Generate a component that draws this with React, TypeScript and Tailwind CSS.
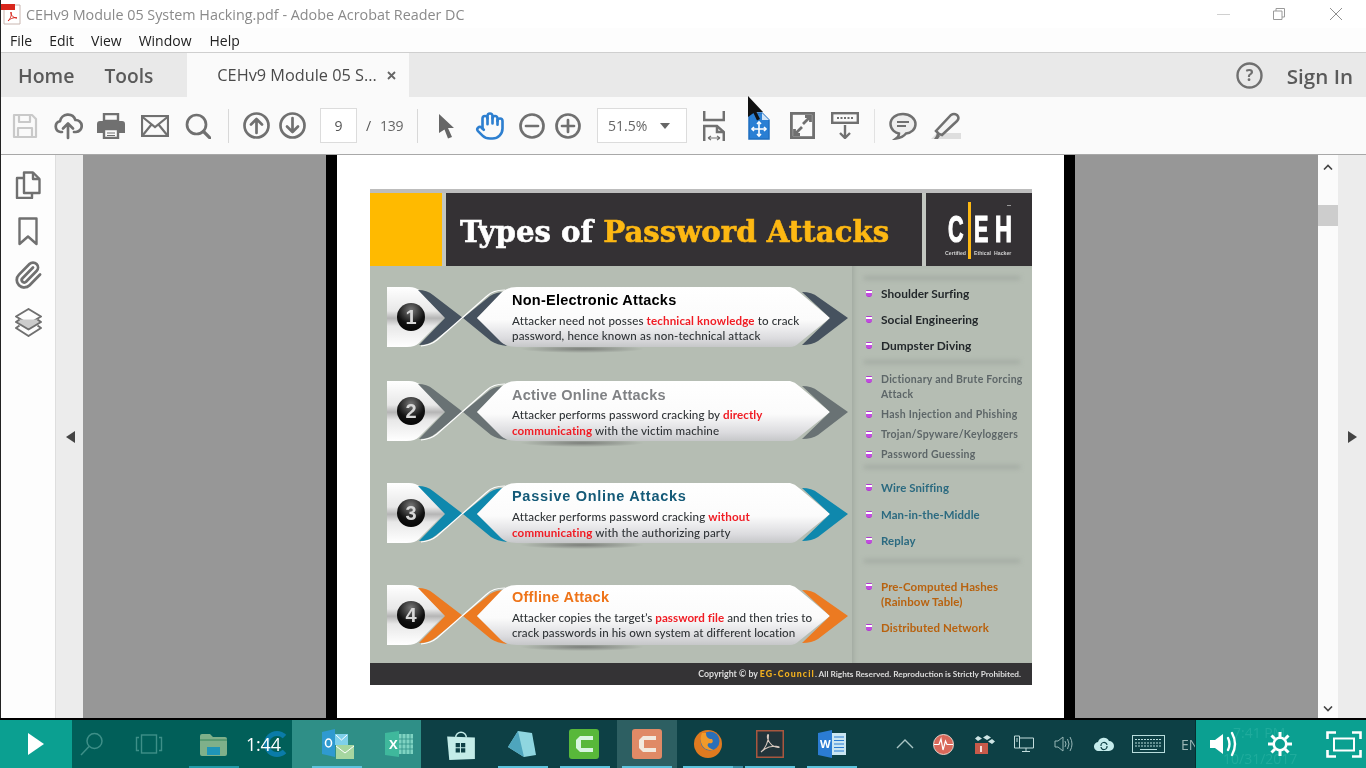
import React from "react";
import { Hand, Paperclip } from "lucide-react";

const G = "#707070";
const ui = "font-['Open_Sans',sans-serif]";

function Ribbon({ n, color, titleColor, title, t, m, body, children }: { n: string; color: string; titleColor: string; title: string; t: string; m: string; body: string; children: React.ReactNode }) {
  const id = "g" + n;
  return (
    <div className="relative h-[60px] w-[461px] flex">
      <svg className="absolute inset-0 overflow-visible" width="461" height="60" viewBox="0 0 461 60">
        <defs>
          <linearGradient id={id} x1="0" y1="0" x2="0" y2="1">
            <stop offset="0" stopColor="#ffffff" />
            <stop offset="0.55" stopColor="#fbfbfb" />
            <stop offset="0.85" stopColor="#dcdcdf" />
            <stop offset="1" stopColor="#c6c7c9" />
          </linearGradient>
          <linearGradient id={id + "l"} x1="0" y1="0" x2="0" y2="1">
            <stop offset="0" stopColor="#ffffff" />
            <stop offset="0.4" stopColor="#e8e8e8" />
            <stop offset="0.52" stopColor="#b5b5b5" />
            <stop offset="0.65" stopColor="#e8e8e8" />
            <stop offset="1" stopColor="#ffffff" />
          </linearGradient>
          <radialGradient id={id + "s"}>
            <stop offset="0" stopColor="#555" stopOpacity="0.6" />
            <stop offset="1" stopColor="#555" stopOpacity="0" />
          </radialGradient>
        </defs>
        <ellipse cx="195" cy="62" rx="62" ry="4" fill={`url(#${id}s)`} />
        <path d="M0 0H22Q29 0 33 4L58 30L32 56Q28 60 20 60H0Z" fill={`url(#${id}l)`} />
        <path d="M31 3Q40 3 46 8L76 31L48 53Q42 58 32 58L58 31Z" fill={color} />
        <path d="M118 5Q109 5 103 9L76 31L104 54Q110 58 120 59L90 31Z" fill={color} />
        <path d="M34 59Q44 58 50 53L100 9Q106 3 118 3" fill="none" stroke="#fff" strokeWidth="1.2" />
        <path d="M90 31L114 6Q120 0 130 0H403Q408 1 412 5L443 31L412 56Q408 60 403 60H130Q120 60 114 55Z" fill={`url(#${id})`} />
        <path d="M415 5Q425 5 431 10L461 31L431 54Q425 58 415 58L443 31Z" fill={color} />
      </svg>
      <div className="relative ml-[10px] mt-[16px] w-[28px] h-[28px] rounded-full bg-[radial-gradient(circle_at_50%_25%,#777,#111_55%,#000)] flex items-center justify-center text-[#d8d8d8] text-[20px] font-black font-['Liberation_Sans',sans-serif] leading-none">
        {n}
      </div>
      <div className={`relative ml-[87px] ${t}`}>
        <div className={`h-[16px] leading-[16px] text-[14.5px] font-bold font-['Liberation_Sans',sans-serif] whitespace-nowrap ${titleColor}`}>{title}</div>
        <div className={`${m} text-[11.6px] text-[#2f3336] font-medium font-['Lato',sans-serif] whitespace-nowrap ${body}`}>{children}</div>
      </div>
    </div>
  );
}

const Red = ({ children }: { children: React.ReactNode }) => <span className="text-[#f01c24] font-bold">{children}</span>;

function Li({ c, lh, bp, lines }: { c: string; lh: string; bp: string; lines: string[] }) {
  return (
    <div className={`flex ${lh} ${c}`}>
      <span className={`w-[29px] shrink-0 flex pl-[14px] ${bp}`}><span className="block w-[6px] h-[7px] rounded-b-[3px] rounded-t-[1px] bg-[#c24be0] border-y border-[#b03bd0] shadow-[inset_0_2px_0_#fff]" /></span>
      <div>{lines.map((l) => <div key={l} className="whitespace-nowrap">{l}</div>)}</div>
    </div>
  );
}

const Sh = ({ m = "-mt-[2px] -mb-[2px]" }: { m?: string }) => <div className={`h-[4px] mx-[12px] bg-[#a4aca3] blur-[2px] ${m}`} />;

function Slide() {
  return (
    <div className="w-[662px] h-[496px] mt-[34px] ml-[33px] flex flex-col bg-[#b5bdb3] border-t-[4px] border-[#bdbdbd]">
      <div className="h-[73px] flex bg-[#c2c6c0]">
        <div className="w-[72px] bg-[#ffba00]" />
        <div className="ml-[4px] w-[476px] bg-[#343134] flex items-center pl-[14px]">
          <span className="mt-[7px] font-['DejaVu_Serif',serif] font-bold text-[29.2px] [-webkit-text-stroke:0.6px_currentColor] text-white whitespace-nowrap">Types of <span className="text-[#fdb813]">Password Attacks</span></span>
        </div>
        <div className="ml-[4px] w-[106px] bg-[#343134] relative flex items-center pl-[22px] pt-[1px] text-white font-bold text-[36px] leading-none font-['Liberation_Sans',sans-serif] [-webkit-text-stroke:1.2px_#fff]">
          <span className="w-[15px] origin-left scale-x-[0.6]">C</span>
          <span className="ml-[5px] w-[3px] h-[57px] bg-[#fdb813]" />
          <span className="ml-[3px] w-[14px] origin-left scale-x-[0.6]">E</span>
          <span className="ml-[7px] w-[17px] origin-left scale-x-[0.65]">H</span>
          <span className="absolute left-[81px] top-[12px] w-[4px] h-px bg-[#999]" />
          <div className="absolute left-[19px] top-[57px] flex text-[5.2px] leading-[6px] text-[#cfcfcf] whitespace-nowrap [-webkit-text-stroke:0px]">
            <span className="w-[29px]">Certified</span>
            <span className="w-[20px]">Ethical</span>
            <span>Hacker</span>
          </div>
        </div>
      </div>
      <div className="flex-1 flex min-h-0">
        <div className="w-[482px] pl-[17px] pt-[21px] flex flex-col">
          <Ribbon n="1" color="#46525f" titleColor="text-black tracking-[0.25px]" t="pt-[5px]" m="mt-[5px]" body="leading-[15px] tracking-[0.12px]" title="Non-Electronic Attacks">
            Attacker need not posses <Red>technical knowledge</Red> to crack<br />password, hence known as non-technical attack
          </Ribbon>
          <div className="h-[34px]" />
          <Ribbon n="2" color="#697274" titleColor="text-[#808285] tracking-[0.25px]" t="pt-[6px]" m="mt-[4px]" body="leading-[16px] tracking-[0.1px]" title="Active Online Attacks">
            Attacker performs password cracking by <Red>directly</Red><br /><Red>communicating</Red> with the victim machine
          </Ribbon>
          <div className="h-[42px]" />
          <Ribbon n="3" color="#0f88ad" titleColor="text-[#145a78] tracking-[0.7px]" t="pt-[5px]" m="mt-[5px]" body="leading-[16px] tracking-[0.12px]" title="Passive Online Attacks">
            Attacker performs password cracking <Red>without</Red><br /><Red>communicating</Red> with the authorizing party
          </Ribbon>
          <div className="h-[42px]" />
          <Ribbon n="4" color="#ec7a21" titleColor="text-[#ee7419] tracking-[0.25px]" t="pt-[4px]" m="mt-[5px]" body="leading-[15px] tracking-[0.05px]" title="Offline Attack">
            Attacker copies the target’s <Red>password file</Red> and then tries to<br />crack passwords in his own system at different location
          </Ribbon>
        </div>
        <div className="flex-1 flex flex-col shadow-[inset_4px_0_4px_-2px_#a2aaa1] font-['Lato',sans-serif] font-bold">
          <div className="h-[96px] text-[11.9px] tracking-[0.05px]">
            <Sh m="mt-[10px] -mb-[14px]" />
            <div className="pt-[15px]">
              <Li c="text-[#23282b]" lh="leading-[26px]" bp="pt-[9px]" lines={["Shoulder Surfing"]} />
              <Li c="text-[#23282b]" lh="leading-[26px]" bp="pt-[9px]" lines={["Social Engineering"]} />
              <Li c="text-[#23282b]" lh="leading-[26px]" bp="pt-[9px]" lines={["Dumpster Diving"]} />
            </div>
          </div>
          <div className="h-[105px] text-[10.5px] tracking-[0.27px]">
            <Sh />
            <div className="pt-[10px] flex flex-col gap-[5px]">
              <Li c="text-[#5d6668]" lh="leading-[15px]" bp="pt-[4px]" lines={["Dictionary and Brute Forcing", "Attack"]} />
              <Li c="text-[#5d6668]" lh="leading-[15px]" bp="pt-[4px]" lines={["Hash Injection and Phishing"]} />
              <Li c="text-[#5d6668]" lh="leading-[15px]" bp="pt-[4px]" lines={["Trojan/Spyware/Keyloggers"]} />
              <Li c="text-[#5d6668]" lh="leading-[15px]" bp="pt-[4px]" lines={["Password Guessing"]} />
            </div>
          </div>
          <div className="h-[94px] text-[11.4px] tracking-[0.1px]">
            <Sh />
            <div className="pt-[8px]">
              <Li c="text-[#2b6a80]" lh="leading-[26.5px]" bp="pt-[9px]" lines={["Wire Sniffing"]} />
              <Li c="text-[#2b6a80]" lh="leading-[26.5px]" bp="pt-[9px]" lines={["Man-in-the-Middle"]} />
              <Li c="text-[#2b6a80]" lh="leading-[26.5px]" bp="pt-[9px]" lines={["Replay"]} />
            </div>
          </div>
          <div className="flex-1 text-[11.5px] tracking-[0.1px]">
            <Sh />
            <div className="pt-[18px] flex flex-col gap-[11px]">
              <Li c="text-[#b8620f]" lh="leading-[15px]" bp="pt-[4px]" lines={["Pre-Computed Hashes", "(Rainbow Table)"]} />
              <Li c="text-[#b8620f]" lh="leading-[15px]" bp="pt-[4px]" lines={["Distributed Network"]} />
            </div>
          </div>
        </div>
      </div>
      <div className="h-[22px] bg-[#343335] flex items-center justify-end pr-[11px] text-[8.8px] font-bold font-['Lato',sans-serif] text-[#dcdcdc] whitespace-nowrap">
        Copyright © by&nbsp;<span className="text-[#f2b01e] font-black tracking-[1.1px]">EG-Council</span><span className="text-[8.25px]">. All Rights Reserved. Reproduction is Strictly Prohibited.</span>
      </div>
    </div>
  );
}

const S = { fill: "none", stroke: G, strokeWidth: 2.7, strokeLinecap: "round" as const, strokeLinejoin: "round" as const };

function Toolbar() {
  const slot = "flex justify-center items-center shrink-0";
  return (
    <div className={`h-[58px] bg-[#fafafa] border-b border-[#a8a8a8] flex items-center pl-[3px] ${ui}`}>
      <div className={`${slot} w-[42px]`}>
        <svg width="26" height="26" viewBox="0 0 26 26"><g fill="none" stroke="#c9c9c9" strokeWidth="2.2" strokeLinejoin="round"><path d="M2 2H20L24 6V24H2Z" /><path d="M7 2V9H18V2" /><path d="M6 24V15H20V24" /></g></svg>
      </div>
      <div className={`${slot} w-[44px]`}>
        <svg width="30" height="28" viewBox="0 0 30 28"><g {...S}><path d="M9 20H7.5A5.5 5.5 0 0 1 7 9.2 8 8 0 0 1 22.4 8 6 6 0 0 1 23 20H21" /><path d="M15 26V12M10 16.5L15 11.5 20 16.5" /></g></svg>
      </div>
      <div className={`${slot} w-[42px]`}>
        <svg width="28" height="26" viewBox="0 0 28 26"><path d="M7 1H21V8H7Z" fill="none" stroke={G} strokeWidth="2.4" /><path d="M3 8H25A3 3 0 0 1 28 11V20H22V15H6V20H0V11A3 3 0 0 1 3 8Z" fill={G} /><path d="M7 16H21V25H7Z" fill="none" stroke={G} strokeWidth="2.4" /><path d="M10 20H18M10 22.5H18" stroke={G} strokeWidth="1.2" /></svg>
      </div>
      <div className={`${slot} w-[46px]`}>
        <svg width="28" height="22" viewBox="0 0 28 22"><g fill="none" stroke={G} strokeWidth="2.2"><rect x="1" y="1" width="26" height="20" /><path d="M1.5 2L14 12 26.5 2M1.5 20.5L10.5 9.5M26.5 20.5L17.5 9.5" /></g></svg>
      </div>
      <div className={`${slot} w-[40px]`}>
        <svg width="26" height="26" viewBox="0 0 26 26"><g {...S}><circle cx="11.5" cy="11.5" r="9.5" /><path d="M18.5 18.5L25 25" strokeWidth="3.2" /></g></svg>
      </div>
      <div className="ml-[10px] w-px h-[34px] bg-[#d8d8d8]" />
      <div className={`${slot} w-[36px] ml-[9px]`}>
        <svg width="27" height="27" viewBox="0 0 27 27"><g {...S}><circle cx="13.5" cy="13.5" r="12" /><path d="M13.5 21V7M8 12.5L13.5 7 19 12.5" /></g></svg>
      </div>
      <div className={`${slot} w-[36px]`}>
        <svg width="27" height="27" viewBox="0 0 27 27"><g {...S}><circle cx="13.5" cy="13.5" r="12" /><path d="M13.5 6V20M8 14.5L13.5 20 19 14.5" /></g></svg>
      </div>
      <div className="ml-[10px] w-[37px] h-[35px] bg-white border border-[#dcdcdc] flex items-center justify-center text-[14px] text-[#555]">9</div>
      <span className="ml-[9px] w-[8px] text-[14px] text-[#555]">/</span>
      <span className="ml-[6px] w-[24px] text-[14px] text-[#666] tracking-[-0.3px]">139</span>
      <div className="ml-[13px] w-px h-[34px] bg-[#d8d8d8]" />
      <div className={`${slot} w-[56px]`}>
        <svg width="17" height="26" viewBox="0 0 17 26"><path d="M1 1L16 15H10L14 24 10 25.5 6.5 16.5 1 20Z" fill="#666" /></svg>
      </div>
      <div className={`${slot} w-[32px]`}><Hand size={30} color="#2d7fd0" strokeWidth={2.1} /></div>
      <div className={`${slot} w-[36px] ml-[8px]`}>
        <svg width="26" height="26" viewBox="0 0 26 26"><g {...S}><circle cx="13" cy="13" r="11.5" /><path d="M7 13H19" /></g></svg>
      </div>
      <div className={`${slot} w-[36px]`}>
        <svg width="26" height="26" viewBox="0 0 26 26"><g {...S}><circle cx="13" cy="13" r="11.5" /><path d="M7 13H19M13 7V19" /></g></svg>
      </div>
      <div className="ml-[11px] w-[90px] h-[35px] bg-white border border-[#dcdcdc] flex items-center pl-[10px] text-[14px] text-[#666]">
        51.5%
        <svg className="ml-[13px]" width="10" height="6" viewBox="0 0 10 6"><path d="M0 0H10L5 6Z" fill="#666" /></svg>
      </div>
      <div className={`${slot} w-[54px]`}>
        <svg width="22" height="30" viewBox="0 0 22 30"><g fill="none" stroke={G} strokeWidth="2.5"><path d="M1.2 0V9H20.8V0" /><path d="M1.2 30V15H14L20.8 21V30" /><path d="M14 15V21H20.8" /></g><path d="M5 27H17M5 27L8 25M5 27L8 29M17 27L14 25M17 27L14 29" stroke={G} strokeWidth="1.2" fill="none" /></svg>
      </div>
      <div className={`${slot} w-[36px]`}>
        <svg width="22" height="28" viewBox="0 0 22 28"><path d="M1 1H14L21 8V27H1Z" fill="#2a7fd4" stroke="#1f6fc0" strokeWidth="1.5" /><path d="M14 1V8H21" fill="#cfe3f7" /><g stroke="#fff" strokeWidth="1.6" fill="none"><path d="M11 10V24M4 17H18" /><path d="M9 12L11 10 13 12M9 22L11 24 13 22M6 15L4 17 6 19M16 15L18 17 16 19" /></g></svg>
      </div>
      <div className={`${slot} w-[50px]`}>
        <svg width="25" height="27" viewBox="0 0 25 27"><rect x="1.4" y="1.4" width="22.2" height="24.2" fill="none" stroke={G} strokeWidth="2.8" /><path d="M13 12L20 5M15 4.5H20.5V10M12 15L5 22M4.5 17V22.5H10" stroke={G} strokeWidth="2.8" fill="none" /></svg>
      </div>
      <div className={`${slot} w-[36px]`}>
        <svg width="28" height="27" viewBox="0 0 28 27"><g fill="none" stroke={G} strokeWidth="2.4"><rect x="1.2" y="1.2" width="25.6" height="9.6" /><path d="M14 13V26M9 21L14 26 19 21" /></g><path d="M6 6H22" stroke={G} strokeWidth="2" strokeDasharray="2 1.5" /></svg>
      </div>
      <div className="ml-[11px] w-px h-[34px] bg-[#e2e2e2]" />
      <div className={`${slot} w-[56px]`}>
        <svg width="28" height="28" viewBox="0 0 28 28"><path d="M14 2C7 2 1.5 6 1.5 12S7 21 10 21.5C10 23 9 25 7 26.5 11 26 15 24 17 21.5 22 21 26.5 17.5 26.5 12S21 2 14 2Z" fill="#eeeeee" stroke={G} strokeWidth="2.5" /><path d="M8 10H20M8 14H17" stroke={G} strokeWidth="1.8" /></svg>
      </div>
      <div className={`${slot} w-[30px]`}>
        <svg width="30" height="28" viewBox="0 0 30 28"><path d="M0 27L6 21H30V27Z" fill="#dedede" /><path d="M5 24L3 27H7L9 24 6 21Z" fill={G} /><path d="M8 22L5 19 20 3Q23 1 26 3 29 6 26 9L11 23Z" fill="#f4f4f4" stroke={G} strokeWidth="2.5" /></svg>
      </div>
    </div>
  );
}

function Sidebar() {
  return (
    <div className="w-[55px] shrink-0 bg-[#fdfdfd] border-r border-[#dedede] flex flex-col items-center pt-[16px]">
      <svg width="26" height="28" viewBox="0 0 26 28"><g fill="none" stroke={G} strokeWidth="2.4" strokeLinejoin="round"><path d="M9 1.5H18L24.5 8V22H9Z" /><path d="M18 1.5V8H24.5" /><path d="M9 7H2V27H17V22" /></g></svg>
      <svg className="mt-[18px]" width="20" height="29" viewBox="0 0 20 29"><path d="M1.5 1.5H18.5V27L10 19.5 1.5 27Z" fill="none" stroke={G} strokeWidth="2.4" strokeLinejoin="round" /></svg>
      <Paperclip className="mt-[14px]" size={30} color={G} strokeWidth={2.2} />
      <svg className="mt-[18px]" width="27" height="30" viewBox="0 0 27 30"><g fill="none" stroke={G} strokeWidth="2" strokeLinejoin="round"><path d="M13.5 1L26 8.5 13.5 16 1 8.5Z" /><path d="M4.5 11.5L1 14 13.5 21.5 26 14 22.5 11.5" fill="#ccc" /><path d="M4.5 17.5L1 20 13.5 28 26 20 22.5 17.5" /></g></svg>
    </div>
  );
}

const Bar = ({ c = "bg-[#5cc3dd]", x }: { c?: string; x: string }) => <span className={`absolute bottom-0 h-[2px] w-[50px] ${x} ${c}`} />;

function Taskbar() {
  const s = "relative h-full flex items-center justify-center shrink-0";
  return (
    <div className={`h-[48px] flex text-white overflow-hidden ${ui}`}>
      <div className="w-[72px] bg-[#0ba091] flex items-center justify-center">
        <svg width="18" height="24" viewBox="0 0 18 24"><path d="M1 1L17 12 1 23Z" fill="#fff" /></svg>
      </div>
      <div className="w-[220px] bg-[#015f59] flex items-center">
        <div className={`${s} w-[40px]`}><svg width="24" height="24" viewBox="0 0 24 24" fill="none" stroke="#3e8f88" strokeWidth="1.5"><circle cx="14.5" cy="9" r="7.5" /><path d="M9 14.5L1 23" /></svg></div>
        <div className={`${s} w-[74px]`}><svg width="28" height="20" viewBox="0 0 28 20" fill="none" stroke="#3e8f88" strokeWidth="1.4"><rect x="6.5" y="1" width="15" height="18" /><path d="M4 3.5H1.5V16.5H4M24 3.5H26.5V16.5H24" /></svg></div>
        <div className={`${s} w-[54px]`}>
          <svg width="27" height="23" viewBox="0 0 27 23"><path d="M0 3A2 2 0 0 1 2 1H10L13 4H25A2 2 0 0 1 27 6V21A2 2 0 0 1 25 23H2A2 2 0 0 1 0 21Z" fill="#7fb08a" /><path d="M7 14H20V22H7Z" fill="#1f95b8" /><path d="M0 6H27V8H0Z" fill="#5a9a72" /></svg>
          <Bar c="bg-[#229aa8]" x="left-[3px]" />
        </div>
        <div className={`${s} w-[52px] justify-start`}>
          <span className="absolute left-[24px] top-[11px] w-[26px] h-[26px] rounded-full border-[5px] border-[#0a7ba8] border-r-transparent" />
          <span className="relative ml-[6px] text-[18px] font-['Open_Sans',sans-serif] tracking-[-0.2px]">1:44</span>
        </div>
      </div>
      <div className="w-[129px] bg-[#2f8f87] flex items-center">
        <div className={`${s} w-[92px]`}>
          <svg width="32" height="32" viewBox="0 0 32 32"><path d="M0 4L13 1V29L0 26Z" fill="#2f9ad0" /><rect x="13" y="6" width="13" height="11" fill="#7ed0ea" /><path d="M14 7L19.5 12 25 7" stroke="#fff" fill="none" strokeWidth="1" /><rect x="14" y="17" width="18" height="14" fill="#a6d6a0" /><path d="M14 18L23 25 32 18" stroke="#fff" fill="none" strokeWidth="1" /><ellipse cx="6.5" cy="15" rx="3" ry="4" fill="none" stroke="#fff" strokeWidth="1.6" /></svg>
          <Bar x="left-[20px]" />
        </div>
        <div className={`${s} w-[29px]`}>
          <svg width="28" height="26" viewBox="0 0 28 26"><path d="M0 2L14 0V26L0 24Z" fill="#3fb89c" /><rect x="14" y="3" width="14" height="20" fill="#7fd3c2" /><path d="M17 3V23M21 3V23M25 3V23M14 8H28M14 13H28M14 18H28" stroke="#2f8f87" strokeWidth=".8" /></svg>
          <span className="absolute left-[5px] top-[15px] text-[13px] font-bold leading-[18px]">X</span>
        </div>
      </div>
      <div className="flex-1 bg-[#0d4045] flex items-center">
        <div className={`${s} w-[80px]`}>
          <svg width="28" height="32" viewBox="0 0 26 30"><path d="M8 9A5 5 0 0 1 18 9" fill="none" stroke="#c3ece8" strokeWidth="1.4" /><path d="M0 8L26 9V29L2 30Z" fill="#c3ece8" /><path d="M8 14H12V18H8ZM13 14H17V18H13ZM8 19H12V23H8ZM13 19H17V23H13Z" fill="#0d4045" /></svg>
        </div>
        <div className={`${s} w-[42px]`}>
          <svg width="28" height="28" viewBox="0 0 28 28"><path d="M10 1L24 3 28 25 16 27 0 17Z" fill="#8fd6e0" /><path d="M10 1L16 27 0 17Z" fill="#4ea5bd" /></svg>
          <Bar x="-left-[3px]" />
        </div>
        <div className={`${s} w-[74px] pl-[8px]`}>
          <svg width="30" height="30" viewBox="0 0 30 30"><rect width="30" height="30" rx="3" fill="#58b83a" /><path d="M24 7H11L7 11V19L11 23H24V19H12V11H24Z" fill="#d8f5e0" /></svg>
          <Bar x="left-[17px]" />
        </div>
        <div className={`${s} w-[60px] bg-[#2d5f62]`}>
          <svg width="30" height="30" viewBox="0 0 30 30"><rect width="30" height="30" rx="3" fill="#e08a66" /><path d="M24 7H11L7 11V19L11 23H24V19H12V11H24Z" fill="#f2e9de" /></svg>
          <Bar x="left-[5px]" />
        </div>
        <div className={`${s} w-[62px]`}>
          <svg width="28" height="28" viewBox="0 0 28 28"><circle cx="14" cy="14" r="14" fill="#e07a1f" /><circle cx="16" cy="11" r="9.5" fill="#2a6fb8" /><path d="M8 3C4 12 9 22 20 20 14 18 12 15 15 13 18 14 20 12 18 9 14 9 12 7 12 3Z" fill="#f09a2a" /></svg>
          <Bar x="left-[6px]" />
          <span className="absolute bottom-0 left-[56px] h-[2px] w-[10px] bg-[#3a8fa6]" />
        </div>
        <div className={`${s} w-[62px]`}>
          <svg width="28" height="28" viewBox="0 0 28 28"><rect x=".75" y=".75" width="26.5" height="26.5" fill="#22343a" stroke="#a8573f" strokeWidth="1.5" /><path d="M5 22C9 19 13 11 12.5 5 12 4 11 5 11.5 8 13 14 18 18 23 17.5 24 16 18 16 13 17 10 18 6 21 5 22Z" fill="none" stroke="#d9c9c0" strokeWidth="1.1" /></svg>
          <Bar x="left-[6px]" />
        </div>
        <div className={`${s} w-[62px]`}>
          <svg width="28" height="28" viewBox="0 0 28 28"><path d="M0 3L14 0V28L0 25Z" fill="#2b7cd3" /><rect x="14" y="3" width="14" height="22" fill="#cbe6f2" /><path d="M16 7H26M16 10.5H26M16 14H26M16 17.5H26M16 21H26" stroke="#2b7cd3" strokeWidth="1.2" /></svg>
          <span className="absolute left-[19px] top-[15px] text-[11px] font-bold leading-[18px]">W</span>
          <Bar x="left-[6px]" />
        </div>
        <svg className="ml-[33px]" width="18" height="10" viewBox="0 0 18 10"><path d="M1 9L9 1 17 9" fill="none" stroke="#a9c4c4" strokeWidth="1.4" /></svg>
        <svg className="ml-[19px]" width="21" height="21" viewBox="0 0 21 21"><circle cx="10.5" cy="10.5" r="10" fill="#d9685a" stroke="#e8d5cc" strokeWidth="1" /><path d="M1 10.5H6L8 5 10 16 12.5 7 14 10.5H20" fill="none" stroke="#fff" strokeWidth="1.2" /></svg>
        <svg className="ml-[21px]" width="20" height="20" viewBox="0 0 20 20"><rect x="0" y="9" width="13" height="11" fill="#c75a4a" /><path d="M6 12V18" stroke="#fff" strokeWidth="1.6" /><path d="M3 2L7 4.5 3 7 0 4.5ZM12 1L16 3.5 12 6 8 3.5ZM17 5L20 7.5 17 10 13 7.5Z" fill="#cfe5e5" /></svg>
        <svg className="ml-[19px]" width="20" height="18" viewBox="0 0 20 18" fill="none" stroke="#c2dcdc" strokeWidth="1"><path d="M0.5 1H5.5V13H0.5ZM5.5 3H19.5V13H5.5ZM12 13V16M8 16.5H16" /><path d="M2 4H4M2 6H4" /></svg>
        <svg className="ml-[20px]" width="19" height="16" viewBox="0 0 19 16" fill="none" stroke="#97b6b6" strokeWidth="1"><path d="M1 5H4L9 1V15L4 11H1Z" /><path d="M11 5Q13 8 11 11M13.5 3Q16.5 8 13.5 13M16 1Q20 8 16 15" /></svg>
        <svg className="ml-[21px]" width="20" height="14" viewBox="0 0 20 14"><path d="M5 14A4.5 4.5 0 0 1 4 5 6 6 0 0 1 15 4 5 5 0 0 1 15 14Z" fill="#c5ecec" /><path d="M7 9A3 3 0 0 1 13 8M13 9A3 3 0 0 1 7 10" fill="none" stroke="#0d4045" strokeWidth="1.2" /></svg>
        <svg className="ml-[18px]" width="33" height="18" viewBox="0 0 33 18" fill="none" stroke="#b7dcdc" strokeWidth="1"><rect x=".5" y=".5" width="32" height="17" /><path d="M3 4.5H30M3 8H30M3 11H30" strokeDasharray="2 1" /><path d="M8 14.5H25" /></svg>
        <span className="ml-[16px] text-[14px] text-[#9bb5b5] whitespace-nowrap">ENG</span>
      </div>
      <div className="relative w-[171px] -ml-[171px] z-10 bg-[#0ba091] border-l border-[#062f30] flex items-center text-white shrink-0">
        <span className="absolute left-[37px] top-[2px] text-[14px] text-[#1fab9c] whitespace-nowrap">7:41 PM</span>
        <span className="absolute left-[27px] top-[28px] text-[14px] text-[#1fab9c] whitespace-nowrap">10/31/2017</span>
        <svg className="relative ml-[14px]" width="29" height="28" viewBox="0 0 29 28"><path d="M0 10H5L13 4V24L5 18H0Z" fill="#fff" /><path d="M18 8Q21 14 18 20M22 3Q28 14 22 25" fill="none" stroke="#fff" strokeWidth="2.4" strokeLinecap="round" /></svg>
        <svg className="relative ml-[29px]" width="24" height="24" viewBox="0 0 24 24" fill="none" stroke="#fff"><circle cx="12" cy="12" r="6.3" strokeWidth="2.6" /><path d="M12 0V5M12 19V24M0 12H5M19 12H24M3.5 3.5L7 7M17 17L20.5 20.5M20.5 3.5L17 7M7 17L3.5 20.5" strokeWidth="3" /></svg>
        <svg className="relative ml-[34px]" width="36" height="27" viewBox="0 0 36 27" fill="none" stroke="#fff" strokeWidth="2.6"><path d="M1.5 8V1.5H10M26 1.5H34.5V8M34.5 19V25.5H26M10 25.5H1.5V19" /><rect x="8" y="7.5" width="20" height="12" strokeWidth="2" /></svg>
      </div>
    </div>
  );
}

export default function App() {
  return (
    <div className={`relative w-[1366px] h-[768px] flex flex-col overflow-hidden bg-white blur-[0.4px] ${ui}`}>
      <div className="flex-1 min-h-0 flex flex-col border-l border-[#222]">
        <div className="h-[28px] bg-white flex items-center shrink-0">
          <svg width="21" height="22" viewBox="0 0 21 22"><path d="M3 2H19V21H3Z" fill="#fff" stroke="#c9b6b0" /><rect x="0" y="1" width="14" height="6" fill="#d8261c" /><path d="M7 18C10 15 11 11 10 9 9 10 11 15 16 15 14 14 10 15 7 18Z" fill="none" stroke="#d8261c" strokeWidth="1" /></svg>
          <span className="ml-[4px] mt-[2px] text-[14.35px] text-[#8a8a8a] whitespace-nowrap">CEHv9 Module 05 System Hacking.pdf - Adobe Acrobat Reader DC</span>
          <div className="ml-auto flex items-center pr-[23px]">
            <span className="w-[13px] h-px bg-[#d0d0d0]" />
            <svg className="ml-[43px]" width="12" height="12" viewBox="0 0 12 12" fill="none" stroke="#9a9a9a"><path d="M.5 3H9V11.5H.5ZM3 3V.5H11.5V9H9" /></svg>
            <svg className="ml-[44px]" width="14" height="14" viewBox="0 0 14 14" stroke="#8f8f8f"><path d="M1 1L13 13M13 1L1 13" /></svg>
          </div>
        </div>
        <div className="h-[25px] bg-[#fdfdfd] border-b border-[#cfcfcf] flex items-center text-[14px] text-[#222] shrink-0">
          <span className="ml-[9px]">File</span>
          <span className="ml-[17px]">Edit</span>
          <span className="ml-[17px]">View</span>
          <span className="ml-[17px]">Window</span>
          <span className="ml-[18px]">Help</span>
        </div>
        <div className="h-[44px] bg-[#e9e9e9] flex items-center shrink-0">
          <span className="ml-[17px] mt-[2px] text-[19.5px] font-semibold text-[#5a5a5a]">Home</span>
          <span className="ml-[30px] mt-[2px] text-[19.2px] font-semibold text-[#5a5a5a]">Tools</span>
          <div className="ml-[34px] w-[222px] h-full bg-[#fafafa] flex items-center pl-[30px] text-[16.3px] text-[#4a4a4a] whitespace-nowrap">
            <span className="mt-[1px]">CEHv9 Module 05 S...</span>
            <svg className="ml-[10px]" width="9" height="9" viewBox="0 0 9 9" stroke="#666" strokeWidth="1.8"><path d="M1 1L8 8M8 1L1 8" /></svg>
          </div>
          <svg className="ml-auto" width="27" height="27" viewBox="0 0 27 27"><circle cx="13.5" cy="13.5" r="12" fill="none" stroke={G} strokeWidth="2.4" /><text x="13.5" y="19" textAnchor="middle" fontSize="16" fontWeight="700" fill={G} fontFamily="Open Sans">?</text></svg>
          <span className="ml-[24px] mr-[13px] mt-[2px] text-[20.6px] font-semibold text-[#5a5a5a]">Sign In</span>
        </div>
        <Toolbar />
        <div className="flex-1 min-h-0 flex">
          <Sidebar />
          <div className="w-[27px] bg-[#ececec] flex items-center justify-center pl-[2px]">
            <svg width="9" height="12" viewBox="0 0 9 12"><path d="M9 0V12L0 6Z" fill="#444" /></svg>
          </div>
          <div className="flex-1 bg-[#979797] flex justify-center">
            <div className="w-[749px] border-x-[11px] border-black bg-white shrink-0">
              <Slide />
            </div>
          </div>
          <div className="w-[20px] bg-[#fbfbfb] flex flex-col items-center">
            <svg className="mt-[9px]" width="10" height="6" viewBox="0 0 10 6" fill="none" stroke="#444" strokeWidth="1.6"><path d="M1 5.5L5 1.5 9 5.5" /></svg>
            <div className="mt-[35px] w-full h-[21px] bg-[#cdcdcd]" />
            <svg className="mt-auto mb-[6px]" width="10" height="6" viewBox="0 0 10 6" fill="none" stroke="#444" strokeWidth="1.6"><path d="M1 .5L5 4.5 9 .5" /></svg>
          </div>
          <div className="w-[28px] bg-[#ececec] flex items-center justify-center">
            <svg width="9" height="12" viewBox="0 0 9 12"><path d="M0 0V12L9 6Z" fill="#444" /></svg>
          </div>
        </div>
      </div>
      <div className="h-[2px] bg-black shrink-0" />
      <Taskbar />
      <svg className="absolute left-[747px] top-[96px]" width="17" height="25" viewBox="0 0 17 25"><path d="M1 0L16 16H9.5L13 23 10 24.5 6.5 17 1 21Z" fill="#111" /></svg>
    </div>
  );
}
